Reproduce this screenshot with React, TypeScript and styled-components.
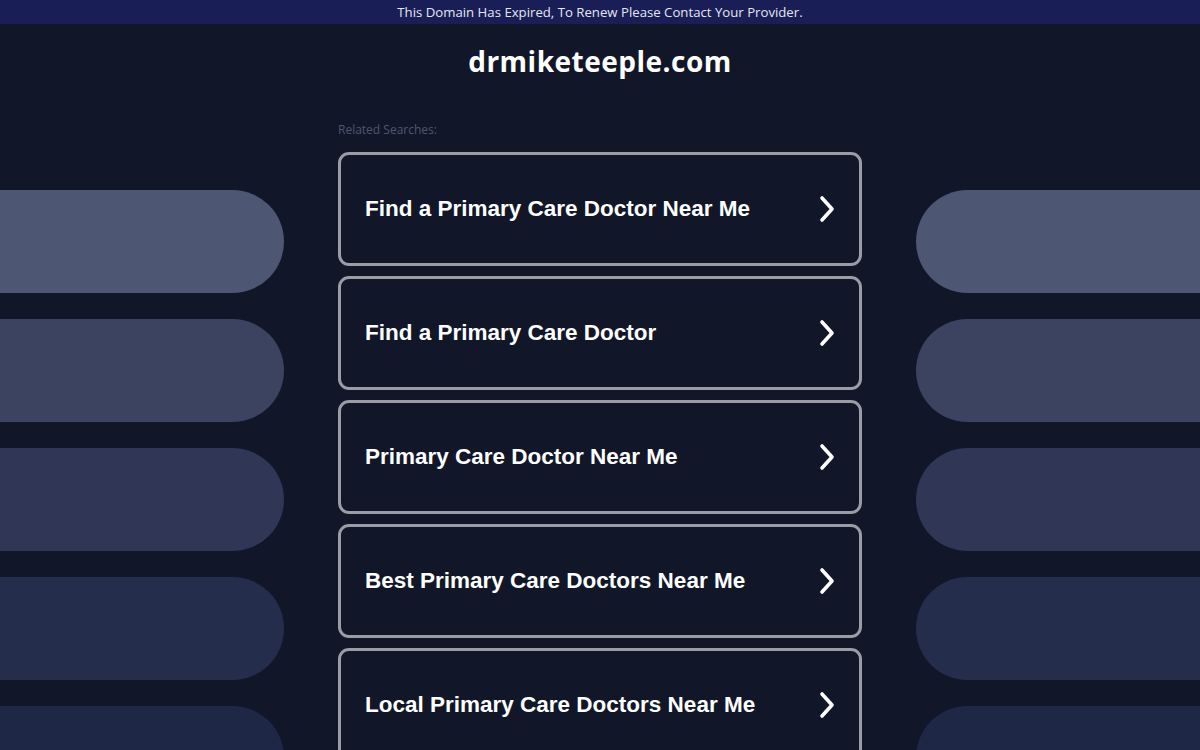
import styled, { createGlobalStyle } from "styled-components";

const GlobalStyle = createGlobalStyle`
    html, body {
        margin: 0;
        padding: 0;
        background: #111729;
    }
    body {
        font-family: "Open Sans", "Liberation Sans", sans-serif;
        overflow: hidden;
    }
`;

const SPage = styled.div`
    width: 1200px;
    height: 750px;
    overflow: hidden;
    background: #111729;
`;

const STopBar = styled.div`
    height: 24px;
    background: #1a1e57;
    color: #e4e6f0;
    font-size: 13.2px;
    line-height: 24px;
    text-align: center;
`;

const SBody = styled.div`
    display: grid;
    grid-template-columns: 284px 524px 284px;
    justify-content: space-between;
`;

const SSide = styled.div`
    display: flex;
    flex-direction: column;
    gap: 26px;
    padding-top: 166px;
`;

const SPill = styled.div<{ $side: "left" | "right"; $shade: string }>`
    height: 103px;
    background: ${(p) => p.$shade};
    border-radius: ${(p) => (p.$side === "left" ? "0 52px 52px 0" : "52px 0 0 52px")};
`;

const SCenter = styled.div`
    display: flex;
    flex-direction: column;
`;

const STitle = styled.h1`
    margin: 0;
    padding-top: 19px;
    font-family: "Open Sans", sans-serif;
    font-size: 28px;
    font-weight: 700;
    line-height: 36px;
    color: #ffffff;
    text-align: center;
    letter-spacing: 0.5px;
`;

const SLabel = styled.div`
    margin-top: 44px;
    font-size: 12px;
    line-height: 14px;
    color: #4f566e;
`;

const SList = styled.div`
    margin-top: 15px;
    display: flex;
    flex-direction: column;
    gap: 10px;
`;

const SCard = styled.a`
    box-sizing: border-box;
    height: 114px;
    display: flex;
    align-items: center;
    justify-content: space-between;
    padding: 0 22px 0 24px;
    border: 3px solid #9b9da6;
    border-radius: 11px;
    background: #111729;
    color: #ffffff;
    text-decoration: none;
    font-family: "Liberation Sans", Arial, sans-serif;
    font-size: 22.5px;
    font-weight: 700;
`;

const SChevron = styled.svg`
    width: 20px;
    height: 30px;
    flex: none;
`;

const shades = ["#4d5773", "#3b4361", "#2f3656", "#252d4c", "#1f2746"];

const searches = [
    "Find a Primary Care Doctor Near Me",
    "Find a Primary Care Doctor",
    "Primary Care Doctor Near Me",
    "Best Primary Care Doctors Near Me",
    "Local Primary Care Doctors Near Me",
];

const Chevron = () => (
    <SChevron viewBox="0 0 20 30">
        <path d="M5 4 L15 15 L5 26" fill="none" stroke="#ffffff" strokeWidth="3.6" strokeLinecap="round" strokeLinejoin="round" />
    </SChevron>
);

const App = () => {
    return (
        <SPage>
            <GlobalStyle />
            <STopBar>This Domain Has Expired, To Renew Please Contact Your Provider.</STopBar>
            <SBody>
                <SSide>
                    {shades.map((shade, index) => (
                        <SPill key={index} $side="left" $shade={shade} />
                    ))}
                </SSide>
                <SCenter>
                    <STitle>drmiketeeple.com</STitle>
                    <SLabel>Related Searches:</SLabel>
                    <SList>
                        {searches.map((text, index) => (
                            <SCard key={index} href="#">
                                <span>{text}</span>
                                <Chevron />
                            </SCard>
                        ))}
                    </SList>
                </SCenter>
                <SSide>
                    {shades.map((shade, index) => (
                        <SPill key={index} $side="right" $shade={shade} />
                    ))}
                </SSide>
            </SBody>
        </SPage>
    );
};

export default App;
